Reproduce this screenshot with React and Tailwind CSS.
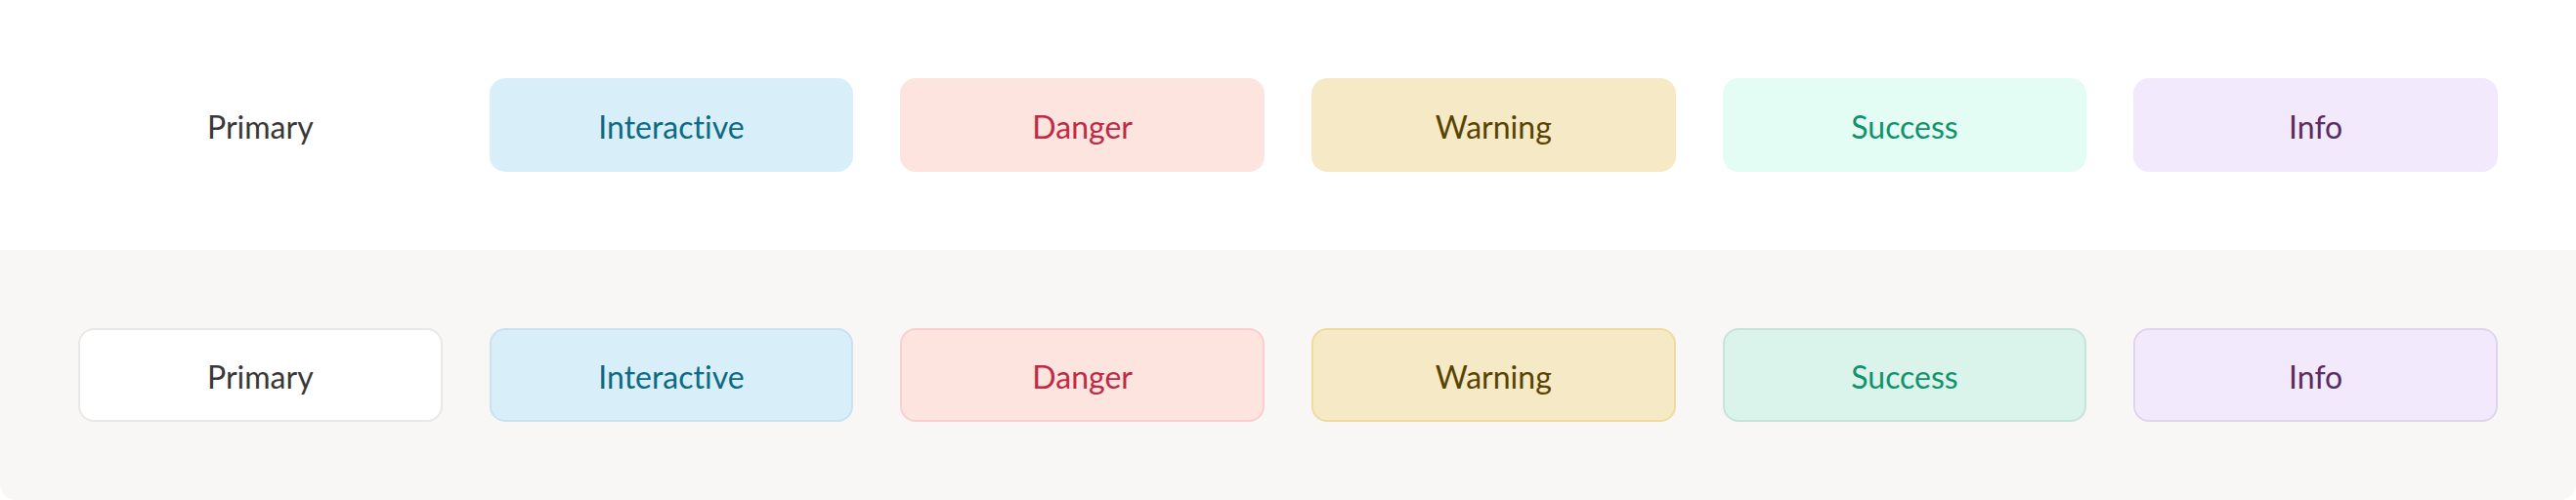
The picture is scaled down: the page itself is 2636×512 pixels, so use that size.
const variants = [
  { label: "Primary", flat: "bg-white text-[#383838]", outlined: "bg-white text-[#383838] border-[#e9e8e6]" },
  { label: "Interactive", flat: "bg-[#d8eff9] text-[#0b6a84]", outlined: "bg-[#d8eff9] text-[#0b6a84] border-[#c9e2ee]" },
  { label: "Danger", flat: "bg-[#fde4df] text-[#c02a44]", outlined: "bg-[#fde4df] text-[#c02a44] border-[#facfcf]" },
  { label: "Warning", flat: "bg-[#f6e9c6] text-[#584400]", outlined: "bg-[#f6e9c6] text-[#584400] border-[#eedc9f]" },
  { label: "Success", flat: "bg-[#e3fdf5] text-[#12926c]", outlined: "bg-[#daf4ec] text-[#12926c] border-[#c6e4dc]" },
  { label: "Info", flat: "bg-[#f2e9fd] text-[#5c2b5f]", outlined: "bg-[#f2e9fd] text-[#5c2b5f] border-[#e2d4ec]" },
];

function Button({ className, children }) {
  return (
    <button
      type="button"
      className={`h-24 w-full rounded-2xl flex items-center justify-center pt-1 text-[32px] leading-none [font-variant-ligatures:none] ${className}`}
    >
      {children}
    </button>
  );
}

export default function App() {
  return (
    <div className="w-[2636px] h-[512px] bg-white" style={{ fontFamily: "Lato, 'Open Sans', sans-serif" }}>
      <div className="grid grid-cols-6 gap-12 px-20 py-20 h-64">
        {variants.map((v) => (
          <Button key={v.label} className={v.flat}>
            {v.label}
          </Button>
        ))}
      </div>
      <div className="grid grid-cols-6 gap-12 px-20 py-20 h-64 bg-[#f8f7f5] rounded-b-2xl">
        {variants.map((v) => (
          <Button key={v.label} className={`border-2 ${v.outlined}`}>
            {v.label}
          </Button>
        ))}
      </div>
    </div>
  );
}
